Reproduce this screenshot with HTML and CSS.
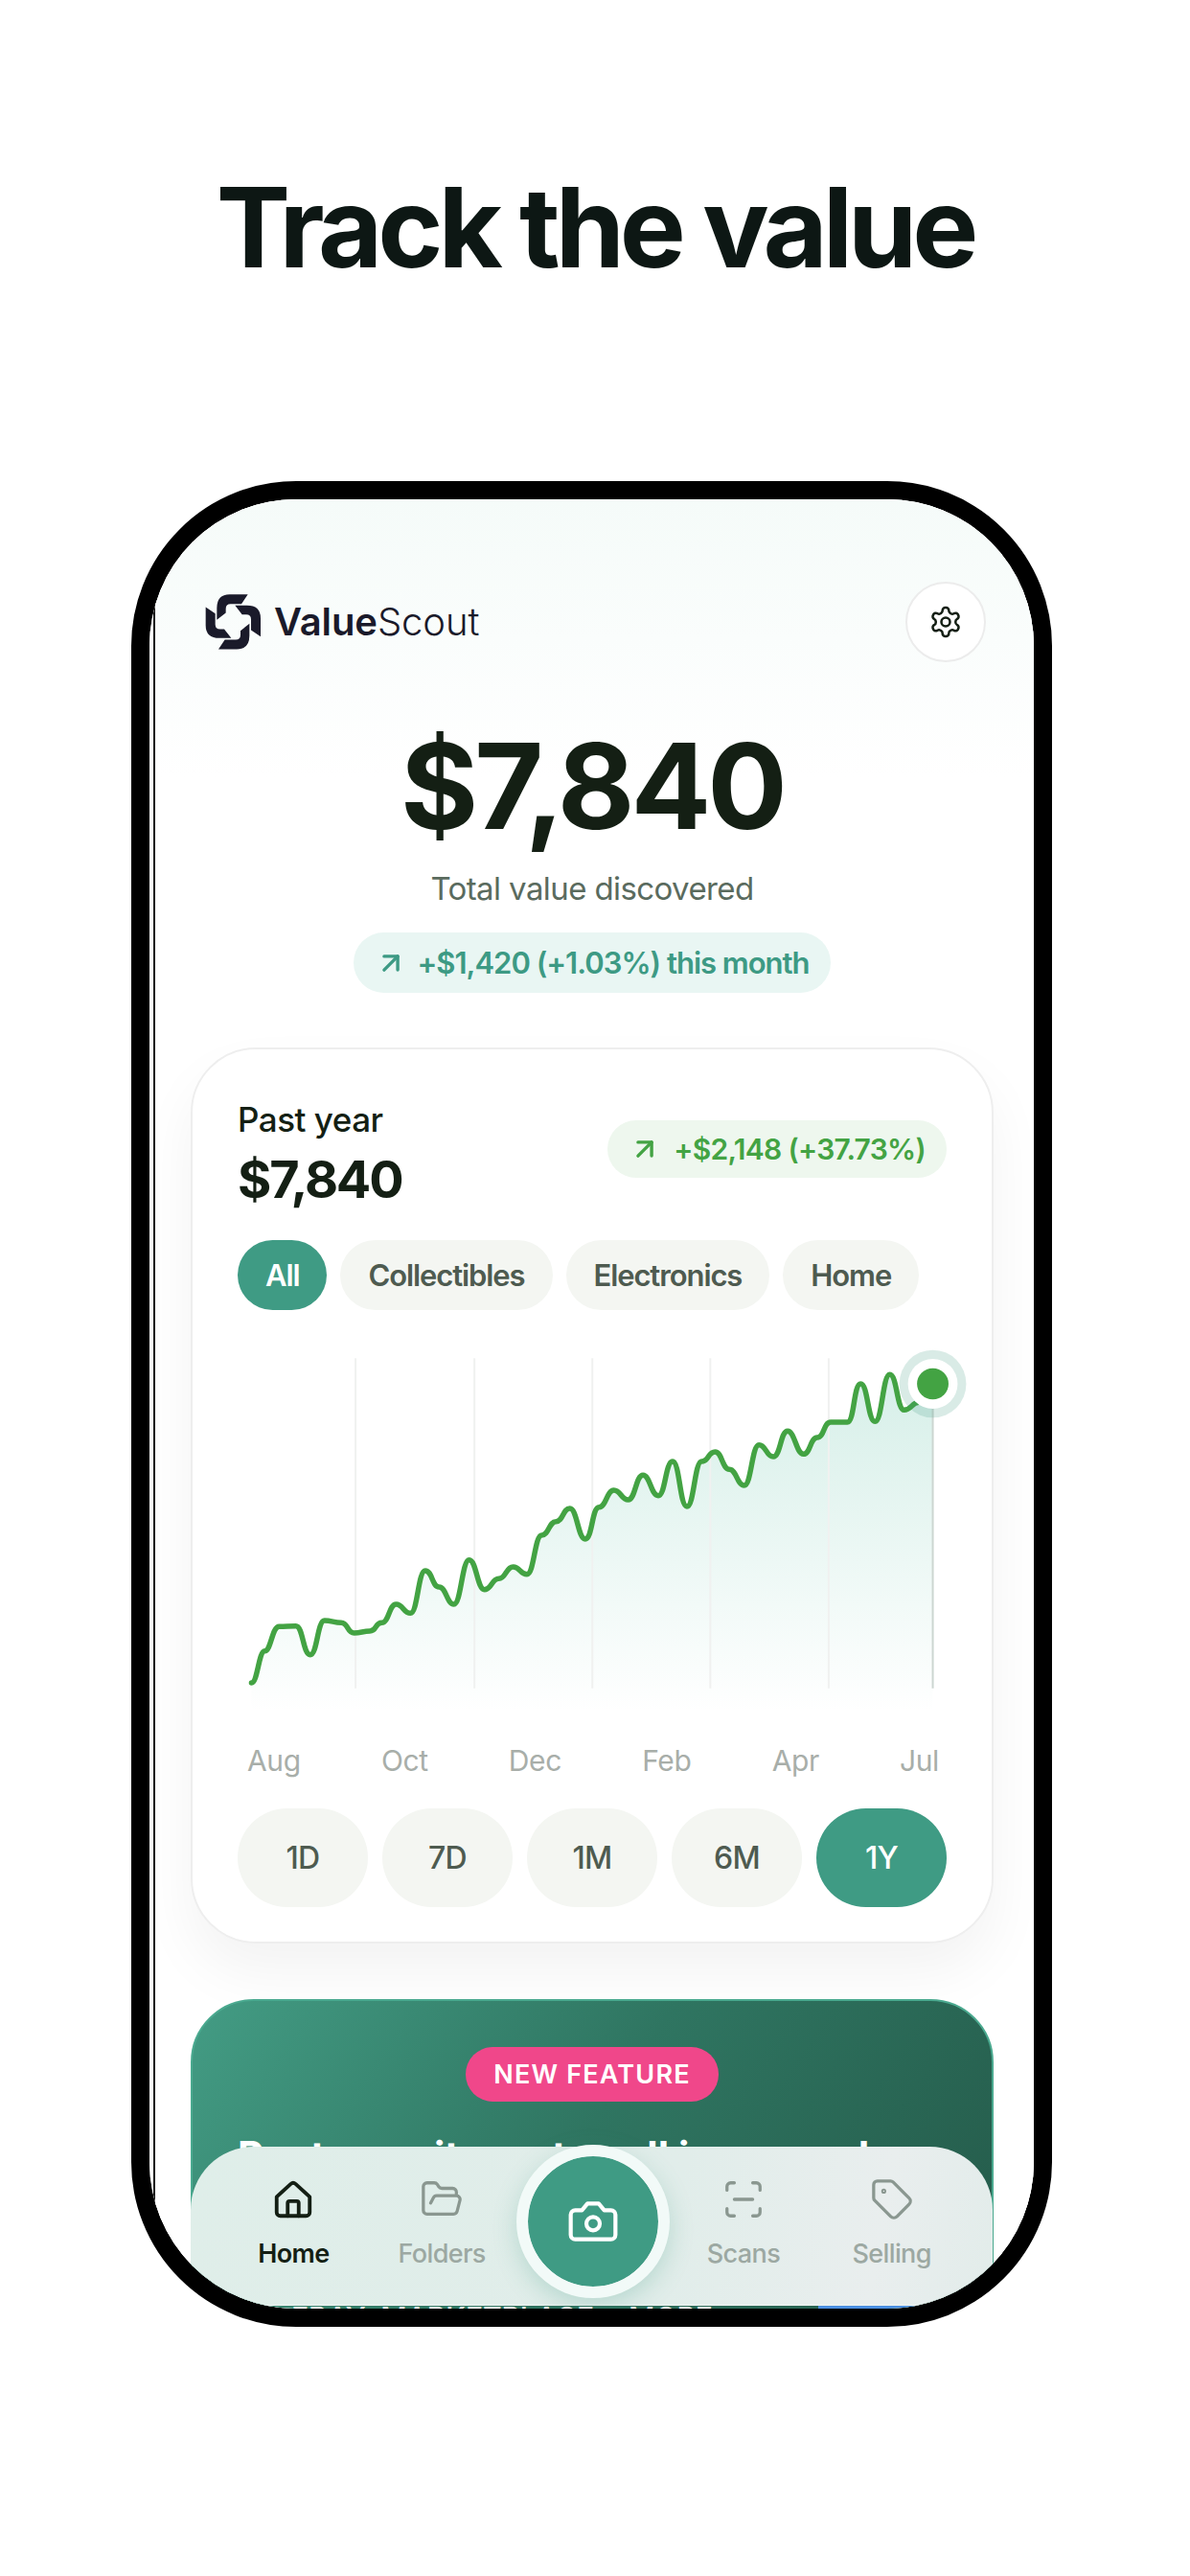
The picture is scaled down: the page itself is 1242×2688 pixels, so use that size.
FILE: index.html
```html
<!DOCTYPE html>
<html>
 <head>
  <title>ValueScout - Track the value</title>
  <link rel="stylesheet" href="styles.css">
 </head>
 <body>
  <h1 class="headline">Track the value</h1>

  <div class="phone">
   <div class="screen">
    <div class="app">
     <!-- Header -->
     <div class="top">
      <div class="brand">
       <svg class="brand-mark" viewBox="75 92 183 173">
        <g id="blades" fill="#1a1a2a">
         <path d="M212 92H155Q115 92 115 135V172L143 150V137Q143 122 158 122H192Z"/>
         <path transform="rotate(90 166 178)" d="M212 92H155Q115 92 115 135V172L143 150V137Q143 122 158 122H192Z"/>
         <path transform="rotate(180 166 178)" d="M212 92H155Q115 92 115 135V172L143 150V137Q143 122 158 122H192Z"/>
         <path transform="rotate(270 166 178)" d="M212 92H155Q115 92 115 135V172L143 150V137Q143 122 158 122H192Z"/>
        </g>
       </svg>
       <span class="brand-name"><b>Value</b>Scout</span>
      </div>
      <div class="settings">
       <svg class="icon" viewBox="0 0 24 24">
        <path d="M12.22 2h-.44a2 2 0 0 0-2 2v.18a2 2 0 0 1-1 1.73l-.43.25a2 2 0 0 1-2 0l-.15-.08a2 2 0 0 0-2.73.73l-.22.38a2 2 0 0 0 .73 2.73l.15.1a2 2 0 0 1 1 1.72v.51a2 2 0 0 1-1 1.74l-.15.09a2 2 0 0 0-.73 2.73l.22.38a2 2 0 0 0 2.73.73l.15-.08a2 2 0 0 1 2 0l.43.25a2 2 0 0 1 1 1.73V20a2 2 0 0 0 2 2h.44a2 2 0 0 0 2-2v-.18a2 2 0 0 1 1-1.73l.43-.25a2 2 0 0 1 2 0l.15.08a2 2 0 0 0 2.73-.73l.22-.39a2 2 0 0 0-.73-2.73l-.15-.08a2 2 0 0 1-1-1.74v-.5a2 2 0 0 1 1-1.74l.15-.09a2 2 0 0 0 .73-2.73l-.22-.38a2 2 0 0 0-2.73-.73l-.15.08a2 2 0 0 1-2 0l-.43-.25a2 2 0 0 1-1-1.73V4a2 2 0 0 0-2-2z"/>
        <circle cx="12" cy="12" r="3"/>
       </svg>
      </div>
     </div>

     <!-- Total -->
     <div class="total">
      <div class="total-value">$7,840</div>
      <div class="total-label">Total value discovered</div>
      <div class="total-change">
       <svg class="arrow" viewBox="0 0 24 24"><path d="M7 7h10v10"/><path d="M7 17 17 7"/></svg>
       <span>+$1,420 (+1.03%) this month</span>
      </div>
     </div>

     <!-- Chart card -->
     <div class="card">
      <div class="card-head">
       <div>
        <div class="card-label">Past year</div>
        <div class="card-value">$7,840</div>
       </div>
       <div class="card-change">
        <svg class="arrow" viewBox="0 0 24 24"><path d="M7 7h10v10"/><path d="M7 17 17 7"/></svg>
        <span>+$2,148 (+37.73%)</span>
       </div>
      </div>

      <div class="chips">
       <span class="chip active">All</span>
       <span class="chip">Collectibles</span>
       <span class="chip">Electronics</span>
       <span class="chip">Home</span>
      </div>

      <svg class="chart" viewBox="18 0 1485 1200" preserveAspectRatio="none">
       <defs>
        <linearGradient id="area" x1="0" y1="0" x2="0" y2="1">
         <stop offset="0" stop-color="#34b08f" stop-opacity="0.2"/>
         <stop offset="1" stop-color="#34b08f" stop-opacity="0"/>
        </linearGradient>
       </defs>
       <path fill="url(#area)" d="M47 1068C60 1068 62 968 75 968S90 892 105 892S125 890 140 890S155 980 170 980S185 873 200 873S220 880 235 880S247 912 262 912S280 906 295 906S305 880 320 880S335 822 350 822S365 850 380 850S396 717 411 717S425 768 440 768S456 822 471 822S488 683 503 683S520 776 535 776S550 742 565 742S580 705 595 705S609 728 624 728S640 606 655 606S670 563 685 563S699 522 714 522S731 618 746 618S760 518 775 518S791 465 806 465S821 495 836 495S852 418 867 418S884 482 899 482S914 375 929 375S944 516 959 516S975 375 990 375S1003 345 1018 345S1033 400 1048 400S1064 450 1079 450S1095 323 1110 323S1125 360 1140 360S1155 280 1170 280S1188 352 1203 352S1217 300 1232 300S1245 252 1260 252S1280 252 1295 252S1308 132 1323 132S1338 250 1353 250S1369 103 1384 103S1399 214 1414 214S1430 190 1445 190S1459 130 1474 130V1160H47Z"/>
       <g class="grid">
        <path d="M265 52V1085"/>
        <path d="M514 52V1085"/>
        <path d="M761 52V1085"/>
        <path d="M1008 52V1085"/>
        <path d="M1256 52V1085"/>
       </g>
       <path class="grid-end" d="M1474 130V1085"/>
       <path class="line" d="M47 1068C60 1068 62 968 75 968S90 892 105 892S125 890 140 890S155 980 170 980S185 873 200 873S220 880 235 880S247 912 262 912S280 906 295 906S305 880 320 880S335 822 350 822S365 850 380 850S396 717 411 717S425 768 440 768S456 822 471 822S488 683 503 683S520 776 535 776S550 742 565 742S580 705 595 705S609 728 624 728S640 606 655 606S670 563 685 563S699 522 714 522S731 618 746 618S760 518 775 518S791 465 806 465S821 495 836 495S852 418 867 418S884 482 899 482S914 375 929 375S944 516 959 516S975 375 990 375S1003 345 1018 345S1033 400 1048 400S1064 450 1079 450S1095 323 1110 323S1125 360 1140 360S1155 280 1170 280S1188 352 1203 352S1217 300 1232 300S1245 252 1260 252S1280 252 1295 252S1308 132 1323 132S1338 250 1353 250S1369 103 1384 103S1399 214 1414 214S1430 190 1445 190S1459 130 1474 130"/>
       <ellipse cx="1474" cy="132" rx="70" ry="106" fill="#3f9b84" fill-opacity="0.2"/>
       <ellipse cx="1474" cy="132" rx="52" ry="78" fill="#fff"/>
       <ellipse cx="1474" cy="132" rx="33" ry="49" fill="#43a343"/>
      </svg>

      <div class="months">
       <span>Aug</span><span>Oct</span><span>Dec</span><span>Feb</span><span>Apr</span><span>Jul</span>
      </div>

      <div class="ranges">
       <span class="range">1D</span>
       <span class="range">7D</span>
       <span class="range">1M</span>
       <span class="range">6M</span>
       <span class="range active">1Y</span>
      </div>
     </div>

     <!-- Promo, mostly hidden under the tab bar -->
     <div class="promo">
      <div class="promo-badge">NEW FEATURE</div>
      <div class="promo-title">Post your items to sell in seconds</div>
      <div class="promo-foot">
       <span class="promo-text">EBAY, MARKETPLACE + MORE</span>
       <span class="promo-btn"></span>
      </div>
     </div>
    </div>

    <!-- Tab bar -->
    <div class="tabs">
     <div class="tab on">
      <svg class="icon" viewBox="0 0 24 24"><path d="M3 10.6 10.7 3.6a2 2 0 0 1 2.6 0L21 10.6V19a2 2 0 0 1-2 2H5a2 2 0 0 1-2-2z"/><path d="M9 21v-7a1 1 0 0 1 1-1h4a1 1 0 0 1 1 1v7"/></svg>
      <span>Home</span>
     </div>
     <div class="tab">
      <svg class="icon" viewBox="0 0 24 24"><path d="m6 14 1.5-2.9A2 2 0 0 1 9.24 10H20a2 2 0 0 1 1.94 2.5l-1.54 6a2 2 0 0 1-1.95 1.5H4a2 2 0 0 1-2-2V5a2 2 0 0 1 2-2h3.9a2 2 0 0 1 1.69.9l.81 1.2a2 2 0 0 0 1.67.9H18a2 2 0 0 1 2 2v2"/></svg>
      <span>Folders</span>
     </div>
     <div class="shutter">
      <svg class="icon" viewBox="0 0 24 24"><path d="M14.5 4h-5L7 7H4a2 2 0 0 0-2 2v9a2 2 0 0 0 2 2h16a2 2 0 0 0 2-2V9a2 2 0 0 0-2-2h-3l-2.5-3z"/><circle cx="12" cy="13" r="3"/></svg>
     </div>
     <div class="tab">
      <svg class="icon" viewBox="0 0 24 24"><path d="M3 7V5a2 2 0 0 1 2-2h2"/><path d="M17 3h2a2 2 0 0 1 2 2v2"/><path d="M21 17v2a2 2 0 0 1-2 2h-2"/><path d="M7 21H5a2 2 0 0 1-2-2v-2"/><path d="M7 12h10"/></svg>
      <span>Scans</span>
     </div>
     <div class="tab">
      <svg class="icon" viewBox="0 0 24 24"><path d="M12.586 2.586A2 2 0 0 0 11.172 2H4a2 2 0 0 0-2 2v7.172a2 2 0 0 0 .586 1.414l8.704 8.704a2.426 2.426 0 0 0 3.42 0l6.58-6.58a2.426 2.426 0 0 0 0-3.42z"/><circle cx="7.5" cy="7.5" r=".5"/></svg>
      <span>Selling</span>
     </div>
    </div>
   </div>
  </div>
 </body>
</html>
```

FILE: styles.css
```css
/* Page */
body {
 margin: 0;
 height: 2688px;
 overflow: hidden;
 background-color: #fff;
 font-family: Inter, "Liberation Sans", sans-serif;
 color: #141f14;
}
.headline {
 margin: 0;
 padding-top: 167px;
 font-size: 116px;
 line-height: 140px;
 font-weight: 700;
 letter-spacing: -5.1px;
 text-align: center;
 color: #0d1714;
}

/* Phone frame */
.phone {
 box-sizing: border-box;
 width: 961px;
 height: 1926px;
 margin: 195px 0 0 137px;
 border: 19px solid #000;
 border-radius: 172px;
 background-color: #fff;
}
.screen {
 position: relative;
 height: 100%;
 overflow: hidden;
 border-radius: 153px;
 background-color: #fff;
}
.app {
 height: 100%;
 margin-left: 4px;
 padding: 86px 42px 0 37px;
 border-left: 2px solid #111;
 background: linear-gradient(180deg, #f5fbf9 0, #fff 290px);
}

/* Header */
.top {
 display: flex;
 justify-content: space-between;
 align-items: center;
 padding: 0 8px 0 14px;
}
.brand {
 display: flex;
 align-items: center;
 gap: 12px;
}
.brand-mark {
 width: 61px;
 height: 58px;
}
.brand-name {
 font-size: 40px;
 line-height: 60px;
 font-weight: 300;
 letter-spacing: -0.1px;
 color: #1a1a2a;
}
.brand-name b {
 font-weight: 600;
}
.settings {
 box-sizing: border-box;
 display: flex;
 justify-content: center;
 align-items: center;
 width: 84px;
 height: 84px;
 border: 2px solid #ececec;
 border-radius: 50%;
 background-color: #fff;
}
.settings .icon {
 width: 36px;
 height: 36px;
 stroke: #141f14;
}
.icon {
 fill: none;
 stroke: currentColor;
 stroke-width: 1.7;
 stroke-linecap: round;
 stroke-linejoin: round;
}
.arrow {
 width: 34px;
 height: 34px;
 fill: none;
 stroke: currentColor;
 stroke-width: 2.4;
 stroke-linecap: round;
 stroke-linejoin: round;
}

/* Total */
.total {
 display: flex;
 flex-direction: column;
 align-items: center;
}
.total-value {
 margin-top: 67px;
 font-size: 124px;
 line-height: 124px;
 font-weight: 700;
 letter-spacing: -4px;
}
.total-label {
 margin-top: 25px;
 font-size: 33px;
 line-height: 40px;
 letter-spacing: -0.6px;
 color: #5a6b5e;
}
.total-change {
 display: flex;
 align-items: center;
 gap: 10px;
 height: 63px;
 margin-top: 26px;
 padding: 0 22px;
 border-radius: 32px;
 background-color: #e9f6f3;
 font-size: 31px;
 font-weight: 600;
 letter-spacing: -1px;
 color: #3d9a84;
}

/* Card */
.card {
 box-sizing: border-box;
 height: 935px;
 margin-top: 57px;
 padding: 51px 47px 0;
 border: 2px solid #eeeeee;
 border-radius: 68px;
 background-color: #fff;
 box-shadow: 0 30px 60px rgba(0, 0, 0, 0.05);
}
.card-head {
 display: flex;
 justify-content: space-between;
 align-items: flex-start;
}
.card-label {
 font-size: 35px;
 line-height: 44px;
 font-weight: 500;
 letter-spacing: -0.5px;
}
.card-value {
 margin-top: 9px;
 font-size: 54px;
 line-height: 64px;
 font-weight: 700;
 letter-spacing: -2.2px;
}
.card-change {
 display: flex;
 align-items: center;
 gap: 13px;
 height: 60px;
 margin-top: 23px;
 padding: 0 22px;
 border-radius: 30px;
 background-color: #eef7ee;
 font-size: 30px;
 font-weight: 600;
 letter-spacing: -0.7px;
 color: #43a343;
}

/* Chips */
.chips {
 display: flex;
 gap: 14px;
 margin-top: 31px;
}
.chip {
 display: flex;
 align-items: center;
 height: 73px;
 padding: 0 29px;
 border-radius: 37px;
 background-color: #f4f6f2;
 font-size: 31px;
 font-weight: 600;
 letter-spacing: -1.1px;
 color: #4e5b50;
}
.chip.active {
 background-color: #3f9b84;
 color: #fff;
}

/* Chart */
.chart {
 display: block;
 width: 100%;
 height: 400px;
 margin-top: 33px;
 overflow: visible;
}
.grid path {
 fill: none;
 stroke: #f0f1f0;
 stroke-width: 2;
 vector-effect: non-scaling-stroke;
}
.grid-end {
 fill: none;
 stroke: #ccd6d1;
 stroke-width: 2;
 vector-effect: non-scaling-stroke;
}
.line {
 fill: none;
 stroke: #43a343;
 stroke-width: 5.5;
 stroke-linecap: round;
 stroke-linejoin: round;
 vector-effect: non-scaling-stroke;
}
.months {
 display: flex;
 justify-content: space-between;
 margin-top: 19px;
 padding: 0 8px 0 10px;
 font-size: 30px;
 line-height: 36px;
 letter-spacing: -0.4px;
 color: #a8aea9;
}
.ranges {
 display: grid;
 grid-template-columns: repeat(5, 1fr);
 gap: 15px;
 margin-top: 32px;
}
.range {
 display: flex;
 justify-content: center;
 align-items: center;
 height: 103px;
 border-radius: 52px;
 background-color: #f4f6f2;
 font-size: 32px;
 font-weight: 500;
 letter-spacing: -0.8px;
 color: #4e5b50;
}
.range.active {
 background-color: #3f9b84;
 color: #fff;
}

/* Promo */
.promo {
 box-sizing: border-box;
 height: 420px;
 margin-top: 58px;
 padding: 48px 47px 0;
 border: 2px solid #4aa98f;
 border-radius: 66px;
 background: linear-gradient(125deg, #439c84 0, #2f7561 45%, #235747 100%);
 color: #fff;
}
.promo-badge {
 width: fit-content;
 height: 57px;
 margin: 0 auto;
 padding: 0 29px;
 border-radius: 29px;
 background-color: #f0478a;
 font-size: 27px;
 line-height: 57px;
 font-weight: 600;
 letter-spacing: 1.2px;
}
.promo-title {
 margin-top: 31px;
 font-size: 42px;
 line-height: 52px;
 font-weight: 700;
 white-space: nowrap;
}
.promo-foot {
 display: flex;
 align-items: flex-start;
 margin-top: 127px;
 padding-left: 56px;
}
.promo-text {
 width: 550px;
 font-size: 30px;
 line-height: 30px;
 font-weight: 500;
 white-space: nowrap;
}
.promo-btn {
 width: 130px;
 height: 40px;
 margin-top: 3px;
 background-color: #4a8ee0;
}

/* Tab bar */
.tabs {
 position: absolute;
 left: 43px;
 right: 43px;
 bottom: 3px;
 box-sizing: border-box;
 display: grid;
 grid-template-columns: repeat(5, 1fr);
 height: 166px;
 padding: 0 28px 0 30px;
 border-radius: 66px 66px 0 0;
 border-bottom: 1px solid #eef3f1;
 background: linear-gradient(100deg, #dfeee9 0, #e1edea 60%, #e9eeee 85%, #e2ecea 100%);
}
.tab {
 display: flex;
 flex-direction: column;
 align-items: center;
 padding-top: 32px;
 font-size: 27px;
 line-height: 34px;
 font-weight: 500;
 letter-spacing: -0.6px;
 color: #9ca8a2;
}
.tab .icon {
 width: 46px;
 height: 46px;
 margin-bottom: 17px;
 stroke: #8a9790;
}
.tab.on {
 color: #141f14;
 font-weight: 600;
}
.tab.on .icon {
 stroke: #141f14;
 stroke-width: 2;
}
.shutter {
 box-sizing: border-box;
 display: flex;
 justify-content: center;
 align-items: center;
 justify-self: center;
 width: 160px;
 height: 160px;
 margin-top: -2px;
 border: 12px solid #f2faf8;
 border-radius: 50%;
 background-color: #3f9b84;
 background-clip: padding-box;
 box-shadow: 0 8px 24px rgba(63, 155, 132, 0.25);
 color: #fff;
}
.shutter .icon {
 width: 56px;
 height: 56px;
 stroke-width: 1.8;
}
```
